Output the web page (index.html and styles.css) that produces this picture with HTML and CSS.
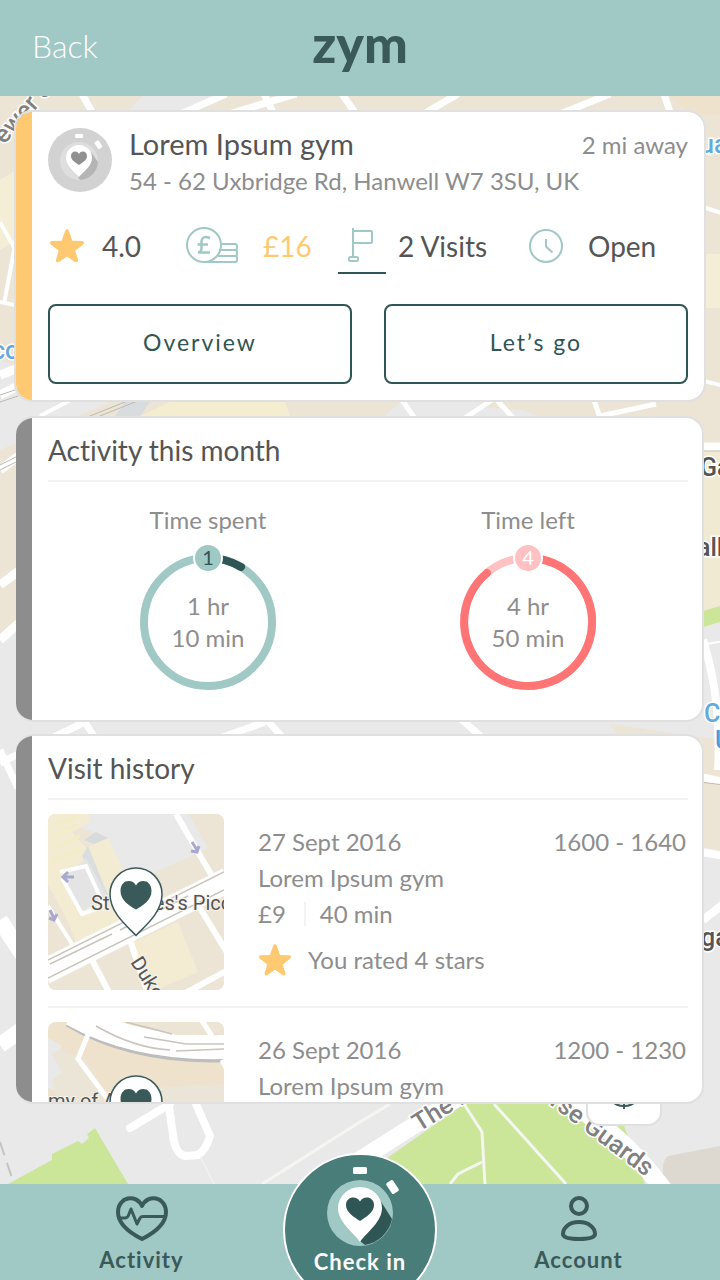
FILE: index.html
```
<!DOCTYPE html>
<html lang="en">
<head>
<meta charset="utf-8">
<meta name="viewport" content="width=device-width, initial-scale=1">
<title>zym</title>
<link rel="stylesheet" href="styles.css">
</head>
<body>
<svg class="sprite" aria-hidden="true">
  <symbol id="star" viewBox="0 0 34 32">
    <path d="M15.200 1.600Q17 -1 18.800 1.600L22 11L31.500 11.300Q34.500 12.200 32 14.800L24.800 20.500L27.500 29.200Q27.500 32.300 24.500 31L17 25.800L9.500 31Q6.500 32.300 6.500 29.200L9.200 20.500L2 14.800Q-0.500 12.200 2.500 11.300L12 11Z" fill="#fec971"/>
  </symbol>
  <symbol id="pin" viewBox="0 0 54 70">
    <path d="M27 68.500C18 59 1 46 1 27A26 26 0 0 1 53 27C53 46 36 59 27 68.500Z" fill="#fff" stroke="#3a5a59" stroke-width="1.500"/>
    <path d="M27 42.500C20 38.500 11.500 33 11.500 24C11.500 12.500 23.500 11.500 27 18.500C30.500 11.500 42.500 12.500 42.500 24C42.500 33 34 38.500 27 42.500Z" fill="#3a5a59"/>
  </symbol>
</svg>
<div class="app">
  <header class="topbar">
    <a class="back" href="#">Back</a>
    <h1 class="brand">zym</h1>
  </header>

  <main class="content">
    <div class="map" aria-hidden="true">
      <svg class="map-art" viewBox="0 96 720 1088" preserveAspectRatio="xMidYMin slice">
        <rect y="96" width="720" height="1088" fill="#e9e9e9"/>
        <path d="M0 96H720V450H650L520 410L420 402L0 640Z" fill="#ece5d6"/>
        <path d="M670 96H720V115H690Z" fill="#eee2cc"/>
        <path d="M142 96H225L180 112H128ZM0 360L110 402L0 450Z" fill="#e9e9e9"/>
        <path d="M400 402L480 402L495 420H380Z" fill="#e9e9e9"/>
        <path d="M140 416L170 402H285L290 416Z" fill="#f4edcf"/>
        <path d="M115 416L125 402H150L140 416Z" fill="#d9dcde"/>
        <path d="M0 180L16 170V240L0 250ZM700 254H720V308H700Z" fill="#f5eed6"/>
        <path d="M610 724L720 740V850L690 846Z" fill="#ece5d6"/>
        <path d="M700 450H720V620H700Z" fill="#f1ead2"/>
        <g fill="none" stroke="#fff">
          <path d="M82 94L92 112M226 94L176 116M264 94L274 114M296 94L222 116M342 94L356 114M458 94L420 116M610 94L560 114M664 94L670 112" stroke-width="7"/>
          <path d="M0 222L20 258M0 302L20 306M16 240L4 304M700 206L724 214M700 380L724 386M40 416L90 390" stroke-width="4"/>
          <path d="M0 375L16 369M0 395L30 380M0 470L20 455M0 585L20 570M0 640L20 622" stroke-width="9"/>
          <path d="M402 400L416 420M495 398L462 420M495 398L515 420M594 400L602 424M600 416L656 404" stroke-width="5"/>
          <path d="M690 447H724" stroke-width="9"/>
          <path d="M0 750L18 788M0 763L85 722M85 722L95 738M220 738L265 722M265 718L285 740M460 718L485 740" stroke-width="7"/>
          <path d="M0 920L22 954M0 1045L24 1028" stroke-width="16"/>
          <path d="M703 640Q722 700 718 770M690 775L724 782M690 850L724 856M703 920L722 905" stroke-width="8"/>
          <path d="M700 645L724 641" stroke-width="2"/>
        </g>
        <path d="M85 418L130 400M95 418L140 400M0 465L18 456M0 470L18 461M0 395L18 389M0 402L18 396M700 451H720M700 782L724 785" fill="none" stroke="#bdb9b1" stroke-width="1"/>
        <path d="M700 612L720 606V622L700 628Z" fill="#cbe699"/>
        <path d="M8 1184L52 1160V1154L78 1141L82 1144L89 1138L87 1134L95 1128L128 1184ZM370 1170L470 1100H615L636 1160L645 1184H370Z" fill="#cbe699"/>
        <path d="M632 1100H720V1184H680L660 1160L636 1140Z" fill="#e9e9e9"/>
        <path d="M720 1146L668 1156Q660 1162 664 1184H720Z" fill="#ddd9d1"/>
        <g fill="none" stroke="#fff" stroke-linejoin="round" stroke-linecap="round">
          <path d="M130 1128L170 1104" stroke-width="8"/>
          <path d="M168 1100L174 1142Q178 1156 186 1156L198 1155Q206 1150 210 1136L196 1104" stroke-width="8"/>
          <path d="M350 1166L470 1090" stroke-width="17"/>
          <path d="M550 1090Q620 1130 664 1190" stroke-width="18"/>
        </g>
        <g fill="none" stroke="#f5f5f2" stroke-width="3">
          <path d="M464 1104L482 1132L485 1184M450 1184L458 1174L482 1162M494 1104L566 1184M262 1184L360 1122M360 1122L390 1104"/>
          <path d="M200 1156L214 1184" stroke-width="1"/>
        </g>
        <path d="M0 1142L14 1184" fill="none" stroke="#c4c4c4" stroke-width="2" stroke-dasharray="14 8"/>
        <g class="map-text">
          <text transform="translate(4 145) rotate(-48)">ewer St</text>
          <text transform="translate(419 1132) rotate(-32)">The Mall</text>
          <text transform="translate(549 1104) rotate(37)">rse Guards</text>
          <text x="700" y="476" fill="#555">Gallery</text>
          <text x="697" y="556" fill="#555">all</text>
          <text x="701" y="946" fill="#555">gate</text>
          <text x="700" y="153" fill="#65a9dd">uare</text>
          <text x="-8" y="359" fill="#65a9dd">co</text>
          <text x="704" y="722" fill="#65a9dd">C</text>
          <text x="715" y="749" fill="#4a9bd8">U</text>
        </g>
      </svg>
      <button class="locate" type="button" tabindex="-1">
        <svg width="44" height="44" viewBox="0 0 44 44" fill="none" stroke="#3a5a59" stroke-width="2"><circle cx="22" cy="22" r="18"/><path d="M22 1V9M22 35V43M1 22H9M35 22H43"/></svg>
      </button>
    </div>

    <section class="card gym">
      <div class="gym-head">
        <svg class="gym-logo" viewBox="0 0 64 64" aria-hidden="true">
          <circle cx="32" cy="32" r="32" fill="#d2d2d2"/>
          <rect x="27" y="6" width="8" height="4" rx="1" fill="#fff"/>
          <rect x="46" y="14" width="8" height="5" rx="1" fill="#fff" transform="rotate(56 50 17)"/>
          <circle cx="31" cy="33" r="19" fill="#dedede"/>
          <path d="M43 24L50 34A19 19 0 0 1 32 52L30 49Z" fill="#b5b5b5"/>
          <path d="M31 49C26 43 18 38 18 30A13 13 0 0 1 44 30C44 38 36 43 31 49Z" fill="#fff"/>
          <path d="M31 37C27 34.500 23 32 23 28C23 23 29 22 31 26C33 22 39 23 39 28C39 32 35 34.500 31 37Z" fill="#919191"/>
        </svg>
        <div class="gym-text">
          <div class="gym-line">
            <h2 class="title gym-name">Lorem Ipsum gym</h2>
            <span class="copy">2 mi away</span>
          </div>
          <p class="copy">54 - 62 Uxbridge Rd, Hanwell W7 3SU, UK</p>
        </div>
      </div>
      <ul class="stats">
        <li class="stat rating"><svg width="38" height="34"><use href="#star" width="38" height="34"/></svg>4.0</li>
        <li class="stat price">
          <svg width="54" height="40" viewBox="0 0 54 40" fill="none" stroke="#a0c8c5" stroke-width="2" aria-hidden="true">
            <circle cx="19" cy="19" r="17"/>
            <path d="M36 18H50Q52 18 52 20V22Q52 24 50 24H36M34 24H50Q52 24 52 26V28Q52 30 50 30H33M50 30Q52 30 52 32V34Q52 36 50 36H19"/>
            <path d="M25 12Q18 9 16.500 14.500V22Q16.500 26 13 26.500H25M12.500 18.500H23" stroke-width="2.500"/>
          </svg>£16
        </li>
        <li class="stat visits">
          <svg class="flag" viewBox="0 0 48 48" fill="none" stroke="#a0c8c5" stroke-width="2" aria-hidden="true">
            <path d="M15 4V33M15 7H33Q34 7 34 8V18Q34 19 33 19H15"/><rect x="11" y="33" width="9" height="4" rx="1.500"/>
          </svg>2 Visits
        </li>
        <li class="stat open">
          <svg width="36" height="36" viewBox="0 0 36 36" fill="none" stroke="#a0c8c5" stroke-width="2" aria-hidden="true"><circle cx="18" cy="18" r="16"/><path d="M18 11V18.500L24.500 24.500"/></svg>Open
        </li>
      </ul>
      <div class="actions">
        <button class="action" type="button">Overview</button>
        <button class="action" type="button">Let’s go</button>
      </div>
    </section>

    <section class="card">
      <h2 class="card-title title">Activity this month</h2>
      <div class="rings">
        <div class="ring-col">
          <h3 class="copy">Time spent</h3>
          <div class="ring">
            <svg width="136" height="148" viewBox="0 0 136 148" fill="none" stroke-width="8" aria-hidden="true">
              <circle cx="68" cy="78" r="64" stroke="#a0c8c5"/>
              <path d="M68 14A64 64 0 0 1 101 23" stroke="#2f5554" stroke-linecap="round"/>
              <circle cx="68" cy="14" r="14" fill="#a0c8c5" stroke="#fff" stroke-width="2"/>
              <text class="ring-count" x="68" y="21" fill="#2f5554">1</text>
            </svg>
            <p class="ring-time copy">1 hr<br>10 min</p>
          </div>
        </div>
        <div class="ring-col">
          <h3 class="copy">Time left</h3>
          <div class="ring">
            <svg width="136" height="148" viewBox="0 0 136 148" fill="none" stroke-width="8" aria-hidden="true">
              <circle cx="68" cy="78" r="64" stroke="#ffc1c1"/>
              <path d="M68 14A64 64 0 1 1 27 29" stroke="#ff7474" stroke-linecap="round"/>
              <circle cx="68" cy="14" r="14" fill="#ffc1c1" stroke="#fff" stroke-width="2"/>
              <text class="ring-count" x="68" y="21" fill="#fff">4</text>
            </svg>
            <p class="ring-time copy">4 hr<br>50 min</p>
          </div>
        </div>
      </div>
    </section>

    <section class="card history">
      <h2 class="card-title title">Visit history</h2>
      <ul class="visits-list">
        <li class="visit">
          <svg class="thumb" viewBox="0 0 176 176" aria-hidden="true">
            <rect width="176" height="176" fill="#e9e9e9"/>
            <path d="M0 0H42L30 12L58 24L75 58L90 75L90 100L0 142ZM90 66L160 34L140 0H176V176H0V150L70 110Z" fill="#ece5d6"/>
            <path d="M0 0H40L42 8L24 18L38 34L60 24L75 56L86 100L28 128L20 108L0 70Z" fill="#f3ecd3"/>
            <path d="M4 22L28 10M6 34L32 22M4 48L34 36M10 10L30 2" stroke="#f3ecc4" stroke-width="3"/>
            <path d="M36 26L48 18L60 24L46 30Z" fill="#d7dbdc"/>
            <path d="M40 32L62 86L56 88L34 42Z" fill="#dbdedf"/>
            <path d="M16 64L38 44L60 84L32 98Z" fill="#e4e4e4"/>
            <path d="M82 130L130 108L150 158L108 176Z" fill="#f3ecd3"/>
            <path d="M12 58L38 52L56 92L34 100L14 64M0 92L24 130" fill="none" stroke="#fff" stroke-width="4"/>
            <path d="M-4 158L180 66" stroke="#fff" stroke-width="25"/>
            <path d="M128 0L164 62M44 146L62 180M82 126L100 180M152 94L180 140M132 182L180 156" stroke="#fff" stroke-width="6"/>
            <path d="M0 146L176 58M0 164L176 76M2 150L64 120M72 116L140 82" stroke="#c9c4bc" stroke-width="1.500"/>
            <path d="M144 28L149 36M143 37L149 38L151 32M26 63H16M20 58L15 63L20 68M2 96L6 104M1 104L6 106L9 100" fill="none" stroke="#a9a9d0" stroke-width="3"/>
            <g class="thumb-text"><text x="43" y="96">St James's Picc</text><text transform="translate(82 148) rotate(58)">Duke St</text></g>
            <use href="#pin" x="61" y="53" width="54" height="70"/>
          </svg>
          <div class="visit-text copy">
            <div class="visit-line"><time>27 Sept 2016</time><span>1600 - 1640</span></div>
            <p>Lorem Ipsum gym</p>
            <p class="cost"><span>£9</span><span class="duration">40 min</span></p>
            <p class="rated"><svg width="34" height="32" aria-hidden="true"><use href="#star" width="34" height="32"/></svg>You rated 4 stars</p>
          </div>
        </li>
        <li class="visit">
          <svg class="thumb" viewBox="0 0 176 176" aria-hidden="true">
            <rect width="176" height="176" fill="#eee2cc"/>
            <path d="M0 16L14 24L12 28L4 32L14 50L6 58L12 70L0 66Z" fill="#e9e9e9"/>
            <path d="M12 28L40 40L56 70V90H12L4 58L14 50L4 32ZM100 66L176 62V90H100Z" fill="#ebe5d7"/>
            <path d="M24 -6Q88 32 180 28" fill="none" stroke="#bdbdbd" stroke-width="24"/>
            <path d="M24 -8Q88 28 180 25" fill="none" stroke="#fff" stroke-width="24"/>
            <path d="M80 0H176V13H128Z" fill="#ece5d6"/>
            <path d="M41 10L30 37L62 80M152 -4L164 14M174 38L180 50" fill="none" stroke="#fff" stroke-width="5"/>
            <path d="M48 4Q86 26 122 28M128 29L176 27M96 15L138 22H176M78 0L124 12" fill="none" stroke="#c9c4bc" stroke-width="1.500"/>
            <g class="thumb-text"><text x="0" y="86">my of Arts</text></g>
            <use href="#pin" x="61" y="53" width="54" height="70"/>
          </svg>
          <div class="visit-text copy">
            <div class="visit-line"><time>26 Sept 2016</time><span>1200 - 1230</span></div>
            <p>Lorem Ipsum gym</p>
          </div>
        </li>
      </ul>
    </section>
  </main>

  <nav class="tabs">
    <a class="tab" href="#">
      <svg width="54" height="48" viewBox="0 0 54 48" fill="none" stroke="#3a5a59" stroke-width="4" stroke-linejoin="round" stroke-linecap="round" aria-hidden="true">
        <path d="M27 45C15 39 3 31 3 18C3 3 21 -1 27 12C33 -1 51 3 51 18C51 31 39 39 27 45Z"/>
        <path d="M4 24H10Q13 24 14 20L16 15L22 30L25 24Q26 22.500 28 22.500H50" stroke-width="3"/>
      </svg>
      Activity
    </a>
    <a class="checkin" href="#">
      <svg width="84" height="84" viewBox="0 0 84 84" aria-hidden="true">
        <rect x="35" y="3" width="14" height="7" rx="1.500" fill="#fff"/>
        <rect x="68" y="19" width="13" height="8" rx="1.500" fill="#fff" transform="rotate(56 74.500 23)"/>
        <circle cx="42" cy="49" r="33" fill="#a0c8c5"/>
        <path d="M62 36L74 55A33 33 0 0 1 47 81L42 77Z" fill="#2f5554"/>
        <path d="M42 78C35 68 20 58 20 44A22 21 0 0 1 64 44C64 58 49 68 42 78Z" fill="#fff"/>
        <path d="M42 57C36 53 28 48.500 28 41C28 32.500 38.500 31 42 37.500C45.500 31 56 32.500 56 41C56 48.500 48 53 42 57Z" fill="#2f5554"/>
      </svg>
      Check in
    </a>
    <a class="tab" href="#">
      <svg width="40" height="48" viewBox="0 0 40 48" fill="none" stroke="#3a5a59" stroke-width="4" aria-hidden="true">
        <circle cx="20" cy="12" r="8"/><path d="M20 28C30 28 36 34 36 40C36 44 29 45 20 45C11 45 4 44 4 40C4 34 10 28 20 28Z"/>
      </svg>
      Account
    </a>
  </nav>
</div>
</body>
</html>
```
FILE: styles.css
```
* { box-sizing: border-box; }
body { margin: 0; font-family: Lato, "Liberation Sans", sans-serif; font-variant-ligatures: none; color: #555; }
h1, h2, h3, p, ul { margin: 0; padding: 0; font-weight: 400; }
ul { list-style: none; }
a { text-decoration: none; }
svg { flex: none; }
.sprite { position: absolute; width: 0; height: 0; }

.app { display: flex; flex-direction: column; height: 100vh; overflow: hidden; }

.topbar { display: grid; grid-template-columns: 1fr auto 1fr; align-items: center; height: 96px; padding: 0 32px 6px; background: #a0c8c5; flex: none; }
.back { color: #fff; font-size: 32px; font-weight: 300; }
.brand { color: #3a5a59; font-size: 52px; line-height: 60px; font-weight: 900; padding-bottom: 4px; }

.content { position: relative; display: flex; flex-direction: column; gap: 12px; flex: 1; min-height: 0; padding: 14px 16px 80px; }
.map { position: absolute; inset: 0; overflow: hidden; }
.map-art { display: block; width: 100%; height: 100%; }
.map-text { font: 500 25px Roboto, sans-serif; fill: #808080; stroke: #fff; stroke-width: 3px; paint-order: stroke; }
.locate { position: absolute; right: 58px; bottom: 58px; display: grid; place-items: center; width: 76px; height: 76px; padding: 0; border: 2px solid #e0e0e0; border-radius: 14px; background: #fff; }

.card { position: relative; flex: none; padding: 0 14px 0 32px; border: 2px solid #e0e0e0; border-left: 0; border-radius: 18px; background: linear-gradient(to right, #8d8d8d 16px, #fff 16px) border-box; overflow: hidden; }
.title { font-size: 28px; line-height: 36px; color: #555; }
.copy { font-size: 24px; line-height: 36px; color: #8d8d8d; }
.card-title { padding: 14px 0 12px; border-bottom: 2px solid #f3f3f3; }

.gym { margin: 0 -2px 2px; padding: 16px 16px 16px 32px; border-left: 2px solid #e0e0e0; background: linear-gradient(to right, #fec971 16px, #fff 16px) padding-box; }
.gym-head { display: flex; gap: 17px; }
.gym-logo { width: 64px; height: 64px; }
.gym-text { flex: 1; margin-top: -1px; }
.gym-line { display: flex; justify-content: space-between; }
.gym-name { font-size: 29px; line-height: 34px; }
.stats { display: grid; grid-template-columns: 137fr 153fr 190fr 160fr; margin-top: 25px; }
.stat { display: flex; align-items: center; height: 44px; font-size: 28px; white-space: nowrap; }
.rating { gap: 16px; }
.price { gap: 24px; color: #fec971; }
.visits { gap: 12px; }
.open { gap: 24px; }
.flag { align-self: flex-start; width: 48px; height: 50px; border-bottom: 2px solid #2f5554; }
.actions { display: grid; grid-template-columns: 1fr 1fr; gap: 32px; margin-top: 36px; }
.action { height: 80px; padding: 0 0 4px; border: 2px solid #2f5554; border-radius: 8px; background: #fff; color: #2f5554; font: 400 23px Lato, sans-serif; letter-spacing: 2px; }

.rings { display: grid; grid-template-columns: 1fr 1fr; padding: 20px 0 28px; }
.ring-col { display: flex; flex-direction: column; align-items: center; gap: 6px; }
.ring { display: grid; }
.ring > * { grid-area: 1 / 1; }
.ring-time { padding-top: 46px; line-height: 32px; text-align: center; }
.ring-count { font-size: 20px; text-anchor: middle; }

.history { flex: 1; min-height: 0; }
.visit { display: flex; gap: 34px; padding: 14px 0 16px; border-bottom: 2px solid #f3f3f3; }
.thumb { width: 176px; height: 176px; border-radius: 8px; }
.thumb-text { font: 20px Roboto, sans-serif; fill: #555; stroke: #f7f4ec; stroke-width: 2px; paint-order: stroke; }
.visit-text { flex: 1; padding-top: 10px; }
.visit-line { display: flex; justify-content: space-between; padding-right: 2px; }
.cost { display: flex; align-items: center; }
.duration { line-height: 24px; margin-left: 18px; padding-left: 14px; border-left: 2px solid #f3f3f3; }
.rated { display: flex; align-items: center; gap: 16px; margin-top: 10px; }

.tabs { position: relative; display: grid; grid-template-columns: 1fr auto 1fr; flex: none; height: 96px; background: #a0c8c5; }
.tab, .checkin { display: flex; flex-direction: column; align-items: center; color: #3a5a59; font-size: 22px; line-height: 28px; font-weight: 700; letter-spacing: 1px; }
.tab { padding-top: 10px; gap: 4px; }
.checkin { width: 154px; height: 154px; margin-top: -31px; padding-top: 9px; border: 2px solid #fff; border-radius: 50%; background: #487d79; color: #fff; }
```
